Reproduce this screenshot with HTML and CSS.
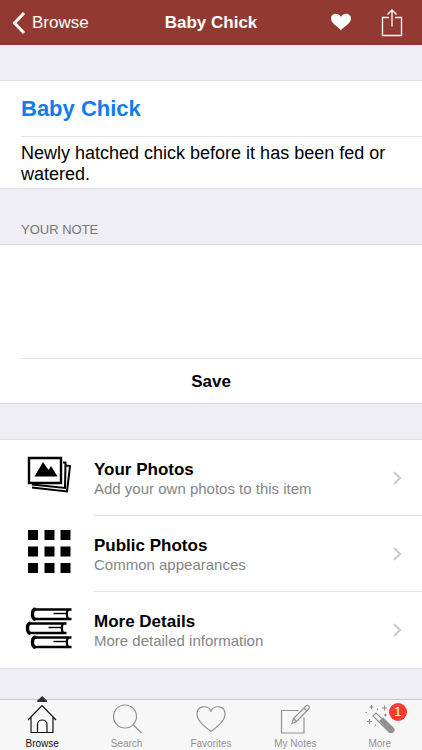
FILE: index.html
```html
<!DOCTYPE html>
<html lang="en">
<head>
<meta charset="utf-8">
<meta name="viewport" content="width=device-width, initial-scale=1">
<title>Baby Chick</title>
<link rel="stylesheet" href="styles.css">
</head>
<body>
<header class="navbar">
  <a class="back" href="#browse">
    <svg width="14" height="24" viewBox="0 0 14 24" aria-hidden="true"><path d="M12 2 2.500 12 12 22" fill="none" stroke="currentColor" stroke-width="3"/></svg>
    <span>Browse</span>
  </a>
  <h1 class="navbar-title">Baby Chick</h1>
  <div class="actions">
    <button class="icon-button" type="button" aria-label="Favorite">
      <svg width="22" height="20" viewBox="0 0 22 20" aria-hidden="true"><path d="M11 17.500C10 14.500 1 11 1 5.500 1 0 8.500-1 11 4 13.500-1 21 0 21 5.500 21 11 12 14.500 11 17.500Z" fill="currentColor"/></svg>
    </button>
    <button class="icon-button" type="button" aria-label="Share">
      <svg width="22" height="28" viewBox="0 0 22 28" aria-hidden="true"><path d="M8 8.500H1.500v18h19V8.500H14M11 17.500V1M6.500 5.500 11 1 15.500 5.500" fill="none" stroke="currentColor" stroke-width="1.300"/></svg>
    </button>
  </div>
</header>

<main class="content">
  <section class="group">
    <h2 class="item-title">Baby Chick</h2>
    <p class="item-text">Newly hatched chick before it has been fed or watered.</p>
  </section>

  <label class="group-label" for="note">YOUR NOTE</label>
  <form class="group note-form">
    <textarea class="note" id="note" name="note"></textarea>
    <button class="save" type="button">Save</button>
  </form>

  <ul class="group links">
    <li>
      <a class="row" href="#your-photos">
        <svg class="row-icon" viewBox="0 0 46 46" aria-hidden="true">
          <path d="M36 9.500h2.500L38 35 5 31.500" fill="none" stroke="#000" stroke-width="2"/>
          <path d="M39 12.500 43 13 40 38.500 5 34.500" fill="none" stroke="#000" stroke-width="2"/>
          <path d="M2 5h32v25H2z" fill="#fff" stroke="#000" stroke-width="2.400"/>
          <path d="M7.500 23.500 16 9l5.500 8 2.500-4 6.500 10.500z"/>
        </svg>
        <span class="row-body">
          <span class="row-text"><strong>Your Photos</strong><span class="subtitle">Add your own photos to this item</span></span>
          <svg class="chevron" viewBox="0 0 9 14" aria-hidden="true"><path d="m1 1 6 6-6 6"/></svg>
        </span>
      </a>
    </li>
    <li>
      <a class="row" href="#public-photos">
        <svg class="row-icon" viewBox="0 0 46 46" aria-hidden="true">
          <path d="M1 1h10v10H1zM17.500 1h10v10h-10zM33.500 1h10v10h-10zM1 17.500h10v10H1zM17.500 17.500h10v10h-10zM33.500 17.500h10v10h-10zM1 34h10v10H1zM17.500 34h10v10h-10zM33.500 34h10v10h-10z"/>
        </svg>
        <span class="row-body">
          <span class="row-text"><strong>Public Photos</strong><span class="subtitle">Common appearances</span></span>
          <svg class="chevron" viewBox="0 0 9 14" aria-hidden="true"><path d="m1 1 6 6-6 6"/></svg>
        </span>
      </a>
    </li>
    <li>
      <a class="row" href="#more-details">
        <svg class="row-icon" viewBox="0 0 46 46" aria-hidden="true">
          <g fill="none" stroke="#000">
            <g id="book">
              <path d="M6 4.500h38.500M6 14h38.500" stroke-width="2.400"/>
              <path d="M8.500 4C4.500 4.500 4.500 13.500 8.500 14.500" stroke-width="3.400"/>
              <path d="M41 4.500c-1.500 3-1.500 6.500 0 9.500" stroke-width="2.200"/>
              <path d="M26.500 8.500h13.500" stroke-width="1.400"/>
            </g>
            <use href="#book" x="-5" y="14"/>
            <use href="#book" y="28"/>
          </g>
        </svg>
        <span class="row-body">
          <span class="row-text"><strong>More Details</strong><span class="subtitle">More detailed information</span></span>
          <svg class="chevron" viewBox="0 0 9 14" aria-hidden="true"><path d="m1 1 6 6-6 6"/></svg>
        </span>
      </a>
    </li>
  </ul>
</main>

<nav class="tabbar" aria-label="Main">
  <a class="tab tab-active" href="#browse" aria-current="page">
    <svg class="tab-icon" viewBox="0 0 32 32"><path d="M2 17 16 2.500 30 17M5 14v15.500h22V14M11.500 29.500V21.500c0-6 9.500-6 9.500 0v8"/></svg>
    <span>Browse</span>
  </a>
  <a class="tab" href="#search">
    <svg class="tab-icon" viewBox="0 0 32 32"><circle cx="14" cy="13.500" r="11.500"/><path d="m22 21.500 8.500 8.500"/></svg>
    <span>Search</span>
  </a>
  <a class="tab" href="#favorites">
    <svg class="tab-icon" viewBox="0 0 32 32"><path d="M16 28.500C10 24 2 18 2 11 2 2.500 13 1.500 16 8 19 1.500 30 2.500 30 11 30 18 22 24 16 28.500Z"/></svg>
    <span>Favorites</span>
  </a>
  <a class="tab" href="#notes">
    <svg class="tab-icon" viewBox="0 0 32 32"><path d="M19.500 7.500H2.500v22.500h22.500V14.500M13 20.500l1.500-5L27 3c1.500-1.500 4.500.5 3 2.500L17.500 18.500zM25 5l3 3M14.500 15.500l3 3"/></svg>
    <span>My Notes</span>
  </a>
  <a class="tab" href="#more">
    <span class="badge-anchor">
      <svg class="tab-icon" viewBox="0 0 32 32"><path d="m9 13 3-3 17 16-3.500 3.500z"/><path class="solid" d="m16 18 3-3 11 11c1 1.500-2 4.500-3.500 3.500z"/><path d="M7.500 2v4M5.500 4h4M20.500 2.500v5M18 5h5M5.500 16v5M3 18.500h5M21.500 10.500v3M20 12h3M13.500 5.500v1.500M1.500 9.500h1.500M10.500 22h1.500"/></svg>
      <span class="badge">1</span>
    </span>
    <span>More</span>
  </a>
</nav>
</body>
</html>
```
FILE: styles.css
```css
* {
  box-sizing: border-box;
}

body {
  margin: 0;
  min-height: 100vh;
  display: flex;
  flex-direction: column;
  background: #efeef4;
  color: #000;
  font-family: "Liberation Sans", Arial, sans-serif;
  font-size: 17px;
  line-height: 21px;
}

h1,
h2,
p,
ul {
  margin: 0;
  padding: 0;
}

a {
  color: inherit;
  text-decoration: none;
}

button {
  border: 0;
  padding: 0;
  background: none;
  color: inherit;
  font: inherit;
}

svg {
  display: block;
}

.navbar {
  display: grid;
  grid-template-columns: 1fr auto 1fr;
  align-items: center;
  height: 45px;
  padding: 0 12px;
  background: #923a31;
  color: #fff;
}

.back {
  display: flex;
  align-items: center;
  gap: 6px;
}

.navbar-title {
  font-size: 17px;
}

.actions {
  display: flex;
  align-items: center;
  justify-content: flex-end;
  gap: 29px;
  padding-right: 7px;
}

.content {
  flex: 1;
  padding: 35px 0 30px;
}

.group {
  background: #fff;
  border: solid #dedde2;
  border-width: 1px 0;
}

.item-title {
  margin-left: 21px;
  padding: 15px 0 14px;
  border-bottom: 1px solid #e4e4e6;
  color: #107cee;
  font-size: 22px;
  line-height: 26px;
}

.item-text {
  padding: 6px 21px 3px;
  font-size: 18px;
}

.group-label {
  display: block;
  padding: 30px 21px 4px;
  color: #77767b;
  font-size: 13px;
}

.note-form {
  display: flex;
  flex-direction: column;
}

.note {
  height: 113px;
  border: 0;
  padding: 12px 21px;
  background: none;
  font: inherit;
  resize: none;
  outline: 0;
}

.save {
  height: 45px;
  margin-left: 21px;
  padding-right: 21px;
  border-top: 1px solid #e4e4e6;
  font-weight: bold;
}

.links {
  margin-top: 35px;
  list-style: none;
}

.row {
  display: flex;
  align-items: center;
  gap: 21px;
  padding-left: 27px;
}

.row-icon {
  flex: none;
  width: 46px;
  height: 46px;
  margin-bottom: 4px;
  overflow: visible;
}

.row-body {
  flex: 1;
  display: flex;
  align-items: center;
  justify-content: space-between;
  height: 76px;
  padding-right: 20px;
  border-bottom: 1px solid #e4e4e6;
}

.links li:last-child .row-body {
  border-bottom: 0;
}

.row-text {
  display: flex;
  flex-direction: column;
}

.subtitle {
  color: #858585;
  font-size: 15px;
  line-height: 17px;
}

.chevron {
  width: 9px;
  height: 14px;
  fill: none;
  stroke: #c7c7cc;
  stroke-width: 2;
}

.tabbar {
  position: sticky;
  bottom: 0;
  display: grid;
  grid-template-columns: repeat(5, 1fr);
  height: 51px;
  border-top: 1px solid #c9c9cc;
  background: #f7f7f8;
}

.tab {
  position: relative;
  display: flex;
  flex-direction: column;
  align-items: center;
  padding-top: 3px;
  color: #929292;
  font-size: 10px;
  line-height: 12px;
}

.tab > span:last-child {
  margin-top: 3px;
}

.tab-active {
  color: #111;
}

.tab-active::before {
  content: "";
  position: absolute;
  top: -4px;
  width: 10px;
  height: 6px;
  background: #303033;
  clip-path: polygon(50% 0, 100% 80%, 100% 100%, 0 100%, 0 80%);
}

.tab-icon {
  width: 32px;
  height: 32px;
  fill: none;
  stroke: currentColor;
  stroke-width: 1.2;
}

.solid {
  fill: currentColor;
}

.badge-anchor {
  position: relative;
}

.badge {
  position: absolute;
  top: 0;
  right: -11px;
  width: 18px;
  height: 18px;
  border-radius: 50%;
  background: #fb3b30;
  color: #fff;
  font-size: 13px;
  line-height: 18px;
  text-align: center;
}
```
